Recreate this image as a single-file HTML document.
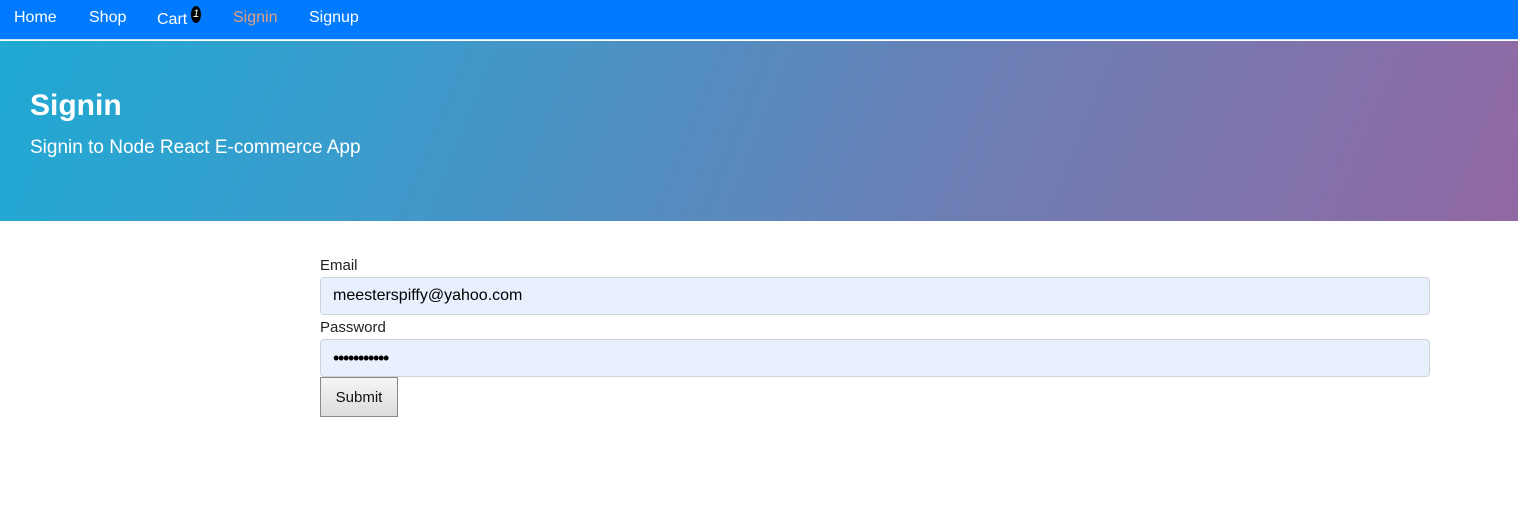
<!DOCTYPE html>
<html><head><meta charset="utf-8"><style>
*{box-sizing:border-box}
body{margin:0;width:1518px;height:520px;background:#fff;font-family:"Liberation Sans",sans-serif;overflow:hidden}
.nav{height:40px;background:#007bff;border-bottom:1px solid #cfe3ff;position:relative}
.nav a{position:absolute;top:9px;color:#fff;font-size:16px;text-decoration:none}
.badge{position:absolute;left:191px;top:6px;width:10px;height:17px;background:#000;border-radius:50%;color:#fff;font-size:11px;font-style:italic;text-align:center;line-height:17px}
.hero{position:absolute;top:41px;left:0;width:1518px;height:180px;background:linear-gradient(112deg,#1fa9d3 0%,#3a9ccc 25%,#6a80b6 62%,#9268a3 100%)}
.hero h1{position:absolute;left:30px;top:48px;margin:0;color:#fff;font-size:30px;font-weight:bold}
.hero p{position:absolute;left:30px;top:96px;margin:0;color:#fff;font-size:19px;font-weight:300}
label{position:absolute;left:320px;font-size:15px;color:#222}
.inp{position:absolute;left:320px;width:1110px;height:38px;background:#e8f0fe;border:1px solid #ced4da;border-radius:4px;padding-left:12px;font-size:16px;line-height:36px;color:#000}
.btn{position:absolute;left:320px;top:377px;width:78px;height:40px;border:1px solid #8a8a8a;background:linear-gradient(#f6f6f6,#dcdcdc);font-size:15px;text-align:center;line-height:40px;color:#111}
</style></head><body>
<div class="nav">
<a style="left:14px">Home</a><a style="left:89px">Shop</a><a style="left:157px;top:11px">Cart</a><span class="badge">1</span>
<a style="left:233px;color:#e0a080">Signin</a><a style="left:309px">Signup</a>
</div>
<div class="hero"><h1>Signin</h1><p>Signin to Node React E-commerce App</p></div>
<label style="top:257px">Email</label>
<div class="inp" style="top:277px">meesterspiffy@yahoo.com</div>
<label style="top:319px">Password</label>
<div class="inp" style="top:339px;font-size:18px;letter-spacing:-1.3px">•••••••••••</div>
<div class="btn">Submit</div>
</body></html>
